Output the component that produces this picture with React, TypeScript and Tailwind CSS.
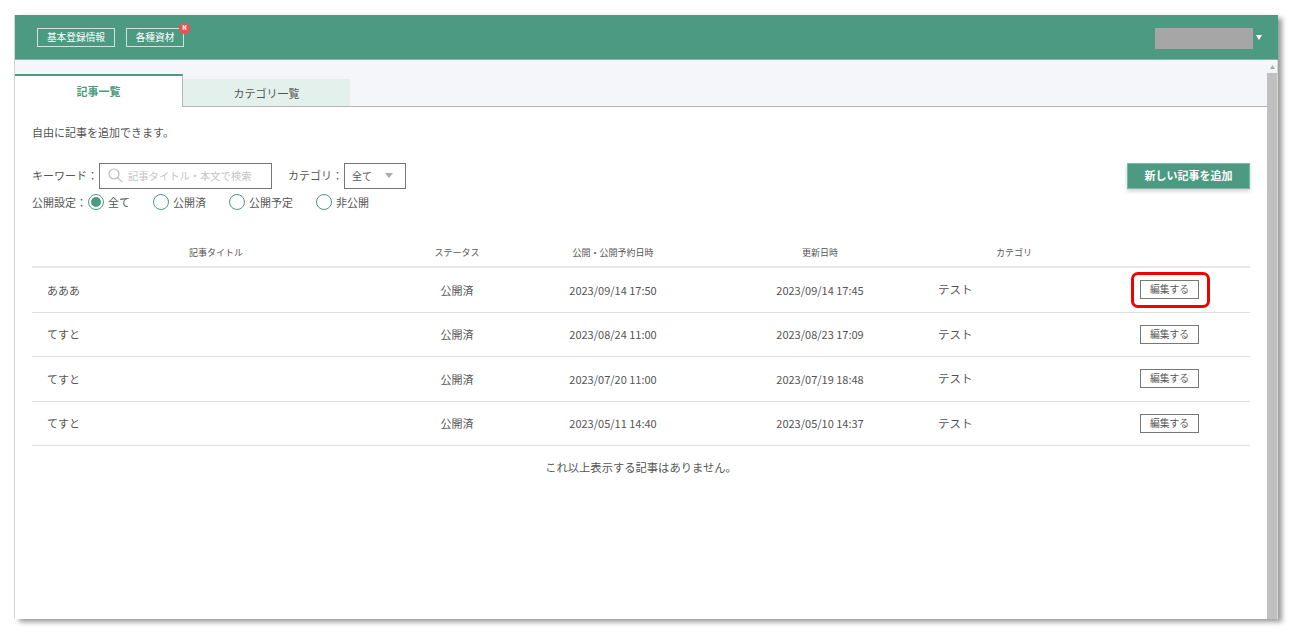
import React from "react";

const font = { fontFamily: '"Noto Sans CJK JP", "Noto Sans", sans-serif' };

const rows = [
  ["あああ", "2023/09/14 17:50", "2023/09/14 17:45", true],
  ["てすと", "2023/08/24 11:00", "2023/08/23 17:09", false],
  ["てすと", "2023/07/20 11:00", "2023/07/19 18:48", false],
  ["てすと", "2023/05/11 14:40", "2023/05/10 14:37", false],
] as const;

const cols = "grid grid-cols-[368px_114px_198px_216px_172px_150px] items-center";

function Radio({ label, on, className }: { label: string; on?: boolean; className: string }) {
  return (
    <div className={`flex items-center ${className}`}>
      <span className="flex h-[16px] w-[16px] items-center justify-center rounded-full border border-[#4c9a82] bg-white">
        {on && <span className="h-[10px] w-[10px] rounded-full bg-[#4c9a82]" />}
      </span>
      <span className="ml-[4px]">{label}</span>
    </div>
  );
}

export default function App() {
  return (
    <div className="h-[643px] w-[1296px] overflow-hidden bg-white pl-[15px] pt-[15px] text-[11px] text-[#555]" style={font}>
      <div className="flex h-[604px] w-[1263px] flex-col bg-white shadow-[4px_3px_5px_rgba(0,0,0,0.4),-1px_0_0_#d8d8d8]">
        <header className="flex h-[45px] shrink-0 items-center justify-between border-b border-[#7fb8a6] bg-[#4c9a82] pl-[22px] pr-[16px]">
          <div className="flex gap-[11px] text-[9.7px] text-white">
            <div className="flex h-[19px] w-[78px] items-center justify-center border border-[#cfe3dc]">基本登録情報</div>
            <div className="relative flex h-[19px] w-[58px] items-center justify-center border border-[#cfe3dc]">
              各種資材
              <span className="absolute right-[-7px] top-[-6px] flex h-[11px] w-[11px] items-center justify-center rounded-full bg-[#ee5050] text-[6px] font-bold leading-none">N</span>
            </div>
          </div>
          <div className="flex items-center gap-[3px] pt-[3px]">
            <div className="h-[21px] w-[98px] bg-[#a6a6a6]" />
            <svg width="6" height="5" viewBox="0 0 6 5" className="mb-[2px]"><path d="M0 0h6L3 5z" fill="#fff" /></svg>
          </div>
        </header>

        <div className="flex min-h-0 flex-1">
          <main className="flex w-[1252px] flex-col">
            <div className="flex h-[47px] shrink-0 items-end border-b border-[#b5b5b5] bg-[#f4f6fa]">
              <div className="mb-[-1px] flex h-[33px] w-[168px] items-center justify-center border-r border-t-2 border-r-[#b5b5b5] border-t-[#4c9a82] bg-white font-bold text-[#4c9a82]">記事一覧</div>
              <div className="flex h-[27px] w-[167px] items-center justify-center bg-[#e4f0ec] pt-[1px]">カテゴリ一覧</div>
            </div>

            <div className="flex flex-1 flex-col px-[17px]">
              <p className="mt-[17px] h-[16px] leading-[16px]">自由に記事を追加できます。</p>

              <div className="mt-[22px] flex h-[27px] items-center">
                <span className="w-[67px]">キーワード：</span>
                <div className="flex h-[26px] w-[173px] items-center border border-[#777] pl-[8px] text-[10.3px] text-[#c4c4c4]">
                  <svg width="15" height="15" viewBox="0 0 15 15" fill="none" stroke="#bbb" strokeWidth="1.2"><circle cx="6" cy="6" r="5" /><path d="M9.6 9.6l4.6 4.6" /></svg>
                  <span className="ml-[5px]">記事タイトル・本文で検索</span>
                </div>
                <span className="ml-[16px] w-[56px]">カテゴリ：</span>
                <div className="flex h-[26px] w-[62px] items-center border border-[#777] pl-[7px] text-[10px]">
                  全て
                  <svg width="8" height="5" viewBox="0 0 8 5" className="ml-[13px]"><path d="M0 0h8L4 5z" fill="#aaa" /></svg>
                </div>
                <button className="ml-auto flex h-[26px] w-[123px] items-center justify-center border border-[#7fb8a6] bg-[#4c9a82] font-bold text-white shadow-[0_2px_4px_rgba(0,0,0,0.2)]">新しい記事を追加</button>
              </div>

              <div className="flex h-[26px] items-center">
                <span className="w-[56px]">公開設定：</span>
                <Radio label="全て" on className="w-[65px]" />
                <Radio label="公開済" className="w-[76px]" />
                <Radio label="公開予定" className="w-[87px]" />
                <Radio label="非公開" className="w-[70px]" />
              </div>

              <div className={`${cols} mt-[26px] h-[27px] border-b-2 border-[#e8e8e8] pb-[1px] text-center text-[9px]`}>
                <div>記事タイトル</div>
                <div>ステータス</div>
                <div>公開・公開予約日時</div>
                <div>更新日時</div>
                <div>カテゴリ</div>
                <div />
              </div>

              {rows.map(([title, pub, upd, hl], i) => (
                <div key={i} className={`${cols} h-[44.5px] border-b border-[#dedede]`}>
                  <div className="pl-[15px] text-[11px]">{title}</div>
                  <div className="text-center">公開済</div>
                  <div className="text-center text-[11px]">{pub}</div>
                  <div className="text-center text-[11px]">{upd}</div>
                  <div className="pl-[10px] text-[11.5px]">テスト</div>
                  <div className="pr-[11px]">
                    <div className="relative mx-auto flex h-[19px] w-[59px] items-center justify-center border border-[#777] text-[9.8px]">
                      編集する
                      {hl && <span className="absolute left-[-10px] top-[-9px] h-[36px] w-[79px] rounded-[7px] border-[3px] border-[#f00000]" />}
                    </div>
                  </div>
                </div>
              ))}

              <p className="mt-[13px] text-center text-[11.3px]">これ以上表示する記事はありません。</p>
            </div>
          </main>

          <aside className="flex w-[11px] flex-col border-r border-[#d8d8d8] bg-[#f4f6fa]">
            <div className="flex h-[13px] items-center justify-center">
              <svg width="5" height="4" viewBox="0 0 5 4"><path d="M2.5 0L5 4H0z" fill="#aaa" /></svg>
            </div>
            <div className="w-[10px] flex-1 bg-[#c0c0c0]" />
          </aside>
        </div>
      </div>
    </div>
  );
}
